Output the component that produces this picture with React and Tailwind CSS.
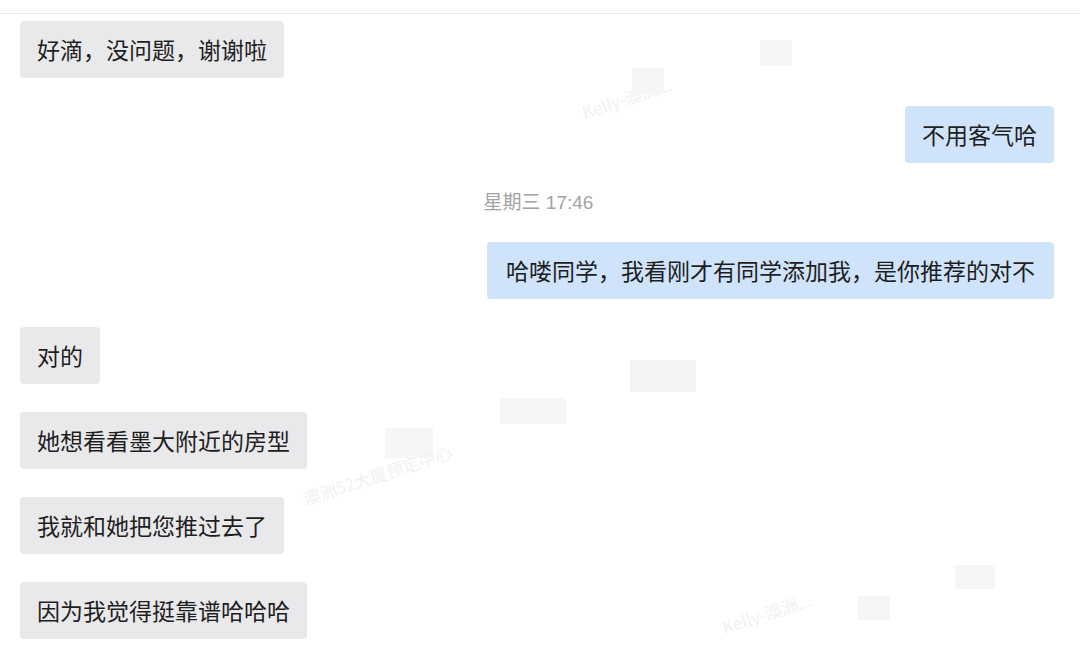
import React from 'react';

const messages = [
  { side: 'left', text: '好滴，没问题，谢谢啦' },
  { side: 'right', text: '不用客气哈' },
  { type: 'time', text: '星期三 17:46' },
  { side: 'right', text: '哈喽同学，我看刚才有同学添加我，是你推荐的对不', wide: true },
  { side: 'left', text: '对的' },
  { side: 'left', text: '她想看看墨大附近的房型' },
  { side: 'left', text: '我就和她把您推过去了' },
  { side: 'left', text: '因为我觉得挺靠谱哈哈哈' },
];

const Bubble = ({ side, text, wide }) => {
  const isRight = side === 'right';
  return (
    <div className={isRight ? 'flex justify-end' : 'flex justify-start'}>
      <div
        className={
          (isRight ? 'bg-[#cfe4fa]' : 'bg-[#e9e9eb]') +
          (wide ? ' px-[19px]' : ' px-[17px]') +
          ' rounded-[4px] py-[16px] text-[23px] leading-[25px] text-[#1e1e1e] whitespace-nowrap'
        }
      >
        {text}
      </div>
    </div>
  );
};

const Watermark = ({ className, children }) => (
  <div className={'absolute pointer-events-none select-none text-[#f1f1f3] text-[17px] -rotate-[18deg] whitespace-nowrap ' + className}>
    {children}
  </div>
);

export default function App() {
  return (
    <div
      className="relative w-[1080px] h-[649px] bg-white overflow-hidden"
      style={{ fontFamily: '"Noto Sans CJK SC", "Noto Sans", sans-serif' }}
    >
      <div className="h-[14px] border-b border-[#ececee]" />
      <div className="flex flex-col gap-[28px] pt-[7px] pl-[20px] pr-[26px]">
        {messages.map((m, i) =>
          m.type === 'time' ? (
            <div key={i} className="flex justify-center">
              <span
                className="text-[19px] leading-[23px] text-[#a3a3a3] pl-[3px]"
                style={{ fontFamily: '"Liberation Sans", "Noto Sans CJK SC", sans-serif' }}
              >
                {m.text}
              </span>
            </div>
          ) : (
            <Bubble key={i} side={m.side} text={m.text} wide={m.wide} />
          )
        )}
      </div>

      <Watermark className="left-[580px] top-[85px]">Kelly-澳洲...</Watermark>
      <div className="absolute left-[632px] top-[68px] w-[32px] h-[26px] bg-[#f6f6f8]" />
      <div className="absolute left-[760px] top-[40px] w-[32px] h-[26px] bg-[#f6f6f8]" />
      <div className="absolute left-[630px] top-[360px] w-[66px] h-[32px] bg-[#f4f4f6]" />
      <div className="absolute left-[500px] top-[398px] w-[66px] h-[26px] bg-[#f6f6f8]" />
      <div className="absolute left-[385px] top-[428px] w-[48px] h-[30px] bg-[#f6f6f8]" />
      <Watermark className="left-[300px] top-[462px]">澳洲52大厦预定中心</Watermark>
      <Watermark className="left-[720px] top-[600px]">Kelly-澳洲...</Watermark>
      <div className="absolute left-[858px] top-[596px] w-[32px] h-[24px] bg-[#f6f6f8]" />
      <div className="absolute left-[955px] top-[565px] w-[40px] h-[24px] bg-[#f6f6f8]" />
    </div>
  );
}
